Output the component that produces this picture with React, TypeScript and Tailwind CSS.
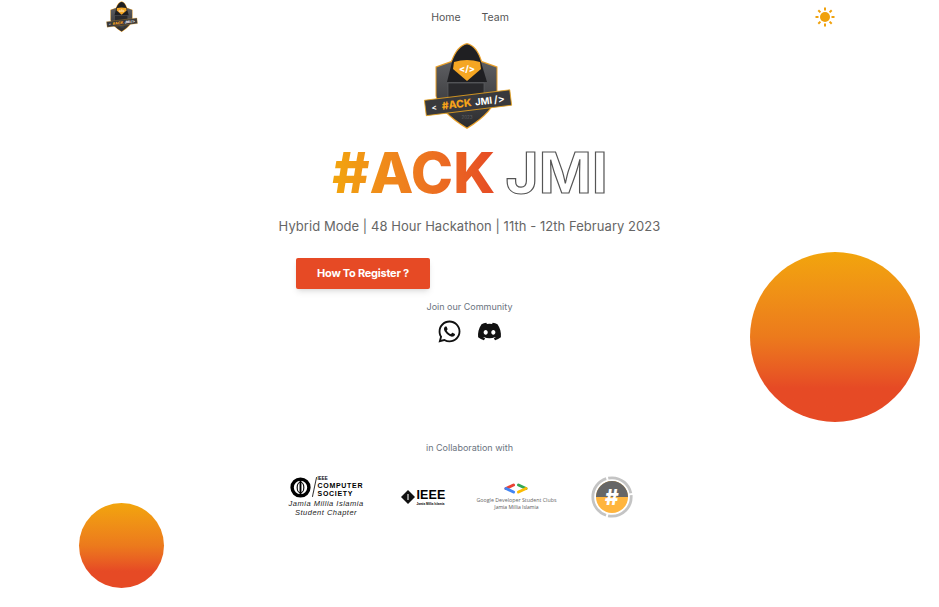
import React from 'react';
import { FaWhatsapp, FaDiscord } from 'react-icons/fa';

const Logo: React.FC<{ className?: string }> = ({ className }) => (
    <svg viewBox="0 0 90 90" className={className}>
        <defs>
            <linearGradient id="shield" x1="0" y1="0" x2="0" y2="1">
                <stop offset="0" stopColor="#6a6b6f" />
                <stop offset="1" stopColor="#2c2c2e" />
            </linearGradient>
        </defs>
        {/* outer shield with the orange rim */}
        <path d="M44 1 Q54 3 59 19 L74.500 24.500 L74.500 52 Q72 70 44 87 Q16 70 12.500 54 L12.500 24.500 L28 19 Q34 3 44 1 Z" fill="#e9a02a" />
        <path d="M44 2.500 Q53 4 58 20 L73.500 25.500 L73.500 52 Q71 69 44 85.500 Q17 69 13.500 54 L13.500 25.500 L29 20 Q35 4 44 2.500 Z" fill="url(#shield)" />
        {/* hood */}
        <path d="M44 2.500 Q53 4 58 20 L64 40 L24 40 L29 20 Q35 4 44 2.500 Z" fill="#1f1f22" />
        <path d="M31 20 Q44 16 57 20 L58 27 L44 39 L30 27 Z" fill="#f5a623" />
        <text x="44" y="30" textAnchor="middle" fontSize="9" fontWeight="800" fill="#fff" fontFamily="Inter, sans-serif">&lt;/&gt;</text>
        <rect x="25" y="41" width="36" height="20" fill="#29292c" stroke="#5d5e62" strokeWidth="0.700" />
        <g transform="rotate(-7 45 60.500)">
            <rect x="2" y="53" width="86" height="15.500" fill="#39393c" stroke="#eba41e" strokeWidth="0.800" />
            <text x="8" y="64" fontSize="8" fontWeight="700" fill="#fff" fontFamily="Inter, sans-serif">&lt;</text>
            <text x="18.500" y="64.500" fontSize="10.500" fontWeight="800" fill="#f5a21a" fontFamily="Inter, sans-serif">#ACK</text>
            <text x="52" y="64.500" fontSize="9.500" fontWeight="700" fill="#fff" fontFamily="Inter, sans-serif">JMI</text>
            <text x="71" y="64.500" fontSize="10" fontWeight="700" fill="#fff" fontFamily="Inter, sans-serif">/&gt;</text>
        </g>
        <text x="44" y="77" textAnchor="middle" fontSize="4.500" fill="#5f6064" fontFamily="Inter, sans-serif">2023</text>
    </svg>
);

const Sun: React.FC = () => (
    <svg viewBox="0 0 20 20" className="h-5 w-5" fill="#f0a10c">
        <circle cx="10" cy="10" r="5" />
        <g stroke="#f0a10c" strokeWidth="2">
            <path d="M10 0.500V3.500M10 16.500V19.500M0.500 10H3.500M16.500 10H19.500M3.300 3.300L5.400 5.400M14.600 14.600L16.700 16.700M3.300 16.700L5.400 14.600M14.600 5.400L16.700 3.300" />
        </g>
    </svg>
);

const ComputerSociety: React.FC = () => (
    <div className="flex w-[73px] flex-col items-center font-['Liberation_Sans',sans-serif]">
        <div className="flex items-center gap-[3px] self-start">
            <svg viewBox="0 0 22 22" className="h-[21px] w-[21px]">
                <circle cx="11" cy="11" r="8.800" fill="none" stroke="#000" strokeWidth="3.600" />
                <ellipse cx="11" cy="11" rx="3.500" ry="5.500" fill="none" stroke="#000" strokeWidth="1.200" />
                <path d="M11 2V20" stroke="#000" strokeWidth="2" />
            </svg>
            <div className="h-[20px] w-px rotate-12 bg-[#333]" />
            <div className="text-black">
                <div className="text-[4.500px] font-bold leading-[6px]">IEEE</div>
                <div className="text-[7px] font-bold leading-[8.100px] tracking-[0.7px]">COMPUTER</div>
                <div className="text-[7px] font-bold leading-[8.100px] tracking-[0.7px]">SOCIETY</div>
            </div>
        </div>
        <div className="mt-[2px] text-center text-[7.500px] italic leading-[8.700px] tracking-[0.5px] text-[#222]">
            <div className="whitespace-nowrap">Jamia Millia Islamia</div>
            <div className="whitespace-nowrap">Student Chapter</div>
        </div>
    </div>
);

const Ieee: React.FC = () => (
    <div className="flex items-center gap-[2px]">
        <svg viewBox="0 0 12 12" className="h-[14px] w-[14px]">
            <path d="M6 0L12 6L6 12L0 6Z" fill="#111" />
            <path d="M6 3.500V8.500" stroke="#fff" strokeWidth="0.900" />
        </svg>
        <div className="flex flex-col font-['Liberation_Sans',sans-serif] text-black">
            <span className="text-[12.500px] font-bold leading-[14.500px] tracking-[0.1px]">IEEE</span>
            <span className="whitespace-nowrap text-[3px] font-bold leading-[4px]">Jamia Millia Islamia</span>
        </div>
    </div>
);

const Gdsc: React.FC = () => (
    <div className="flex w-[80px] flex-col items-center font-['Open_Sans',sans-serif]">
        <svg viewBox="0 0 24 10" className="h-[11px] w-[24px]">
            <path d="M9.500 1.500L2 5" stroke="#ea4335" strokeWidth="3" strokeLinecap="round" />
            <path d="M2 5L9.500 8.500" stroke="#4285f4" strokeWidth="3" strokeLinecap="round" />
            <path d="M14.500 1.500L22 5" stroke="#34a853" strokeWidth="3" strokeLinecap="round" />
            <path d="M22 5L14.500 8.500" stroke="#fbbc04" strokeWidth="3" strokeLinecap="round" />
        </svg>
        <span className="mt-[3px] whitespace-nowrap text-[5.300px] leading-[7.300px] text-[#666]">Google Developer Student Clubs</span>
        <span className="whitespace-nowrap text-[5px] leading-[7px] text-[#555]">Jamia Millia Islamia</span>
    </div>
);

const HashBadge: React.FC = () => (
    <svg viewBox="0 0 42 42" className="h-[42px] w-[42px]">
        <circle cx="21" cy="21" r="19.200" fill="none" stroke="#c4c4c4" strokeWidth="2.800" strokeDasharray="34 2 48 2 30 2" />
        <circle cx="21" cy="21" r="16" fill="#ffb53e" />
        <path d="M5 21A16 16 0 0 1 37 21Z" fill="#666" />
        <text x="21" y="28.500" textAnchor="middle" fontSize="21" fontWeight="800" fill="#fff" fontFamily="Inter, sans-serif">#</text>
    </svg>
);

const App: React.FC = () => {
    return (
        <div className="relative h-[607px] w-full overflow-hidden bg-white font-['Inter',sans-serif]">
            <nav className="flex h-[34px] items-center justify-between pl-[106px] pr-[104px]">
                <Logo className="h-[32px] w-[32px]" />
                <div className="flex gap-[21px] pr-[13px] pt-[1px] text-[10.500px] text-[#555]">
                    <a>Home</a>
                    <a>Team</a>
                </div>
                <Sun />
            </nav>

            <main className="flex flex-col items-center">
                <Logo className="mr-[4px] mt-[8px] h-[90px] w-[90px]" />
                <h1 className="ml-[1px] mt-[9px] flex gap-[10px] text-[57px] font-extrabold leading-[64px]">
                    <span className="bg-gradient-to-r from-[#f2a50c] to-[#e64a25] bg-clip-text text-transparent">#ACK</span>
                    <span className="font-bold text-transparent [-webkit-text-stroke:1.200px_#555]">JMI</span>
                </h1>
                <p className="mt-[11px] text-[13px] leading-[20px] tracking-[0.05px] text-[#666]">
                    Hybrid Mode | 48 Hour Hackathon | 11th - 12th February 2023
                </p>
                <div className="mt-[22px] w-[347px]">
                    <button className="h-[31px] w-[134px] rounded-[2px] bg-[#e64a25] text-[11px] font-bold tracking-[-0.25px] text-white shadow-md">
                        How To Register ?
                    </button>
                </div>
                <p className="mt-[11px] text-[9px] leading-[14px] text-[#6b7480]">Join our Community</p>
                <div className="mt-[5px] flex items-center gap-[15px] text-[#111]">
                    <FaWhatsapp className="h-[25px] w-[25px]" />
                    <FaDiscord className="h-[25px] w-[25px]" />
                </div>

                <p className="mt-[97px] text-[9px] leading-[14px] text-[#6b7480]">in Collaboration with</p>
                <div className="mt-[21px] flex items-center pr-[16px]">
                    <ComputerSociety />
                    <div className="ml-[38px]"><Ieee /></div>
                    <div className="ml-[31px]"><Gdsc /></div>
                    <div className="ml-[35px]"><HashBadge /></div>
                </div>
            </main>

            <div className="absolute left-[750px] top-[252px] h-[170px] w-[170px] rounded-full bg-gradient-to-b from-[#f2a50c] via-[#ec7a1c] via-50% to-[#e64a25] to-80%" />
            <div className="absolute left-[79px] top-[503px] h-[85px] w-[85px] rounded-full bg-gradient-to-b from-[#f2a50c] via-[#ec7a1c] via-50% to-[#e64a25] to-80%" />
        </div>
    );
};

export default App;
